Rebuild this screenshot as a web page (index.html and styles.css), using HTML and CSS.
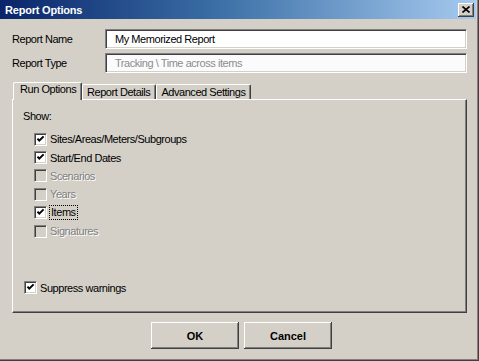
FILE: index.html
```html
<!DOCTYPE html>
<html lang="en">
<head>
<meta charset="UTF-8" />
<title>Report Options</title>
<link rel="stylesheet" href="styles.css">
</head>
<body>

<div class="window">
  <!-- Barra de título -->
  <div class="titlebar">
    <span class="title">Report Options</span>
    <button class="close" aria-label="Close">
      <svg viewBox="0 0 8 7" width="8" height="7">
        <path d="M0.5 0.5 L7.5 6.5 M7.5 0.5 L0.5 6.5" stroke="#000" stroke-width="1.6" />
      </svg>
    </button>
  </div>

  <div class="content">
    <div class="field">
      <label>Report Name</label>
      <div class="input">My Memorized Report</div>
    </div>
    <div class="field">
      <label>Report Type</label>
      <div class="input disabled">Tracking \ Time across items</div>
    </div>

    <!-- Pestañas -->
    <div class="tabs">
      <div class="tab active">Run Options</div>
      <div class="tab">Report Details</div>
      <div class="tab">Advanced Settings</div>
    </div>

    <div class="panel">
      <div class="show">Show:</div>
      <div class="checks">
        <div class="check"><span class="box on"></span><span>Sites/Areas/Meters/Subgroups</span></div>
        <div class="check"><span class="box on"></span><span>Start/End Dates</span></div>
        <div class="check off"><span class="box"></span><span>Scenarios</span></div>
        <div class="check off"><span class="box"></span><span>Years</span></div>
        <div class="check"><span class="box on"></span><span class="focus">Items</span></div>
        <div class="check off"><span class="box"></span><span>Signatures</span></div>
      </div>
      <div class="check suppress"><span class="box on"></span><span>Suppress warnings</span></div>
    </div>

    <div class="buttons">
      <button class="btn default">OK</button>
      <button class="btn">Cancel</button>
    </div>
  </div>
</div>

</body>
</html>
```

FILE: styles.css
```css
* {
  margin: 0;
  padding: 0;
  box-sizing: border-box;
}
body {
  font-family: 'Liberation Sans', Arial, sans-serif;
  font-size: 11px;
  letter-spacing: -0.45px;
  color: #000;
  background: #d4d0c8;
}

/* Ventana */
.window {
  width: 479px;
  height: 361px;
  background: #d4d0c8;
  border-right: 1px solid #404040;
  border-bottom: 1px solid #404040;
  box-shadow: inset -1px -1px 0 #808080;
  padding-right: 2px;
  display: flex;
  flex-direction: column;
}

.titlebar {
  height: 19px;
  background: linear-gradient(90deg, #0a246a 0%, #3a6ea5 45%, #a6caf0 100%);
  display: flex;
  align-items: center;
  justify-content: space-between;
  padding: 0 2px 0 5px;
}
.title {
  color: #fff;
  font-weight: bold;
  font-size: 11px;
  letter-spacing: -0.2px;
}
.close {
  width: 16px;
  height: 14px;
  background: #d4d0c8;
  border: none;
  box-shadow: inset -1px -1px 0 #404040, inset 1px 1px 0 #fff, inset -2px -2px 0 #808080;
  display: flex;
  align-items: center;
  justify-content: center;
}

.content {
  padding-left: 12px;
  display: flex;
  flex-direction: column;
}

/* Campos */
.field {
  display: flex;
  align-items: center;
  margin-top: 4px;
}
.field:first-child {
  margin-top: 10px;
}
.field label {
  width: 93px;
}
.input {
  width: 362px;
  height: 20px;
  background: #fff;
  border-top: 1px solid #808080;
  border-left: 1px solid #808080;
  border-right: 1px solid #fff;
  border-bottom: 1px solid #fff;
  box-shadow: inset 1px 1px 0 #404040, inset -1px -1px 0 #d4d0c8;
  padding-left: 9px;
  line-height: 18px;
}
.input.disabled {
  color: #8c8c8c;
  background: #fbfbfd;
}

/* Pestañas */
.tabs {
  display: flex;
  align-items: flex-end;
  margin-top: 9px;
  height: 17px;
  padding-left: 1px;
  position: relative;
  z-index: 1;
}
.tab {
  height: 15px;
  padding: 0 5px 0 4px;
  line-height: 14px;
  background: #d4d0c8;
  border-top: 1px solid #fff;
  border-left: 1px solid #fff;
  border-right: 1px solid #404040;
  box-shadow: inset -1px 0 0 #808080;
  border-radius: 2px 2px 0 0;
}
.tab.active {
  width: 69px;
  height: 18px;
  margin-bottom: -1px;
  padding: 0 0 0 6px;
  line-height: 13px;
}

/* Panel */
.panel {
  width: 455px;
  height: 214px;
  border-top: 1px solid #fff;
  border-left: 1px solid #fff;
  border-right: 1px solid #404040;
  border-bottom: 1px solid #404040;
  box-shadow: inset -1px -1px 0 #808080;
  padding: 10px 0 0 10px;
  display: flex;
  flex-direction: column;
}
.show {
  height: 13px;
  line-height: 13px;
}
.checks {
  margin-top: 7px;
  padding-left: 11px;
}
.check {
  display: flex;
  align-items: center;
  gap: 3px;
  height: 18.4px;
}
.box {
  width: 13px;
  height: 13px;
  background: #fff;
  border-top: 1px solid #808080;
  border-left: 1px solid #808080;
  border-right: 1px solid #fff;
  border-bottom: 1px solid #fff;
  box-shadow: inset 1px 1px 0 #404040, inset -1px -1px 0 #d4d0c8;
  flex: none;
}
.box.on {
  background: #fff url("data:image/svg+xml,%3Csvg xmlns='http://www.w3.org/2000/svg' viewBox='0 0 11 11'%3E%3Cpath d='M2.5 4.6 L4.3 6.6 L8.6 2.4' fill='none' stroke='%23000' stroke-width='2'/%3E%3C/svg%3E") center / 11px 11px no-repeat;
}
.check.off .box {
  background: #d4d0c8;
}
.check.off span:last-child {
  color: #808080;
  text-shadow: 1px 1px 0 #fff;
}
.focus {
  outline: 1px dotted #000;
  padding: 0 1px;
  line-height: 13px;
}
.suppress {
  margin-top: 38px;
  padding-left: 1px;
}

/* Botones */
.buttons {
  display: flex;
  gap: 5px;
  margin-top: 9px;
  padding-left: 139px;
}
.btn {
  width: 88px;
  height: 27px;
  font-family: 'Liberation Sans', Arial, sans-serif;
  font-size: 11px;
  font-weight: bold;
  background: #d4d0c8;
  border: none;
  box-shadow: inset -1px -1px 0 #404040, inset 1px 1px 0 #fff, inset -2px -2px 0 #808080;
}
```
